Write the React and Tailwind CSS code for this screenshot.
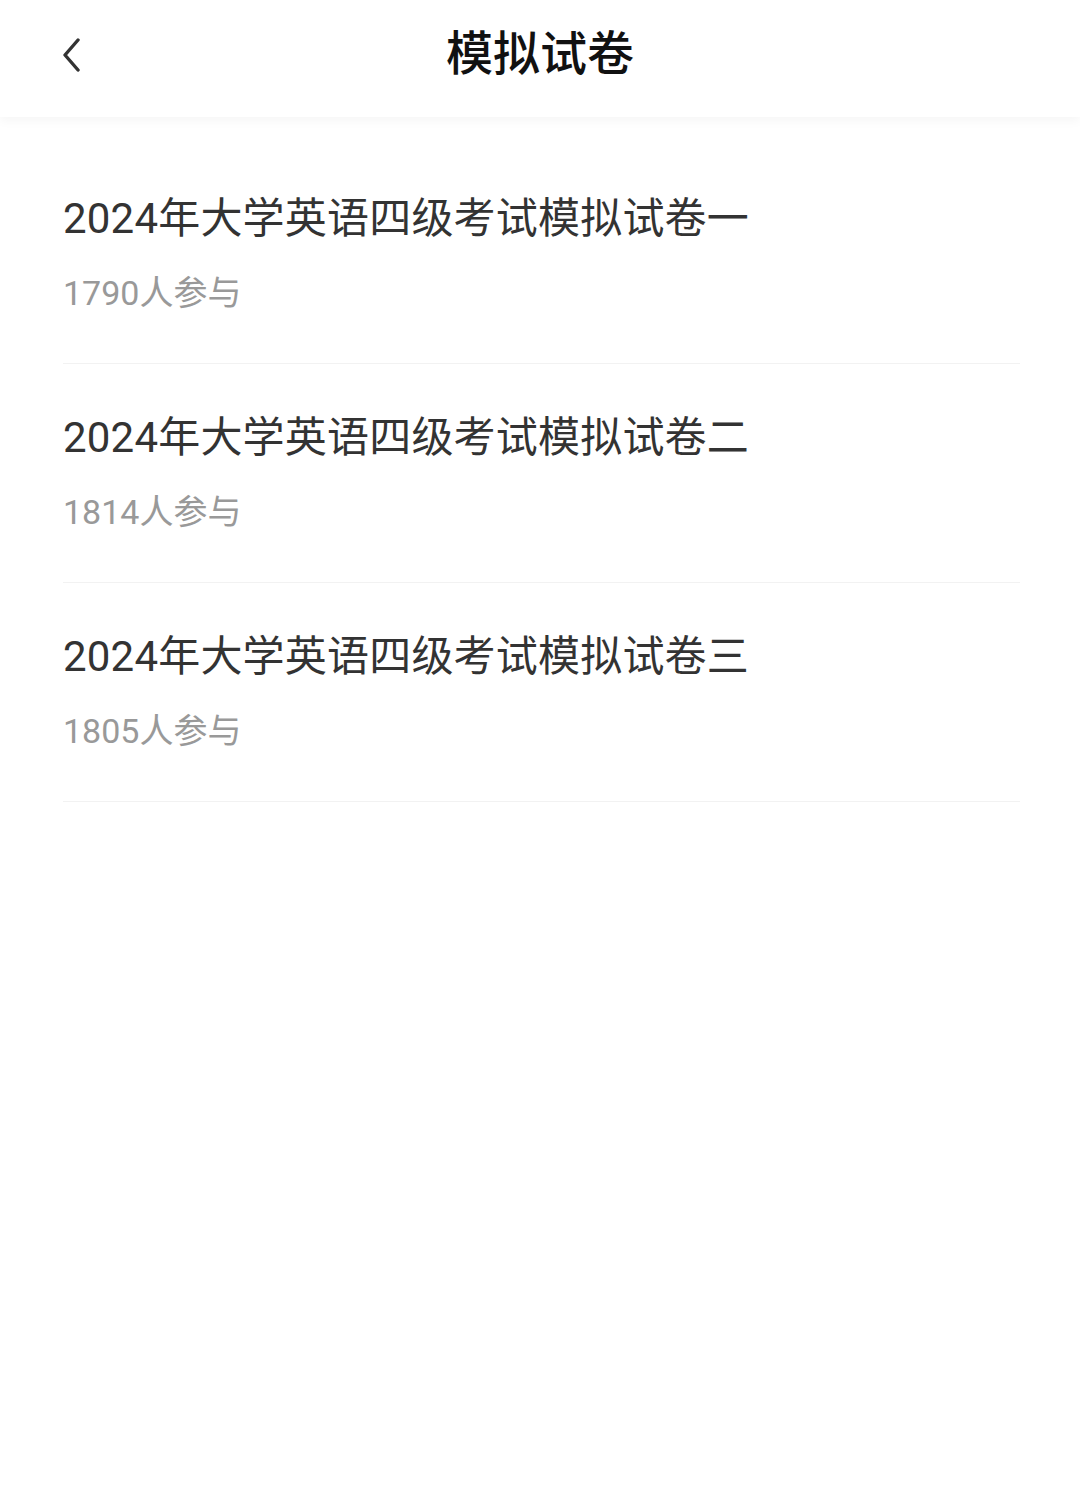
import React from 'react';

const papers = [
    { title: '2024年大学英语四级考试模拟试卷一', count: 1790 },
    { title: '2024年大学英语四级考试模拟试卷二', count: 1814 },
    { title: '2024年大学英语四级考试模拟试卷三', count: 1805 },
];

const App = () => {
    return (
        <div className="min-h-[1498px] bg-white" style={{ fontFamily: 'Roboto, "Noto Sans CJK SC", sans-serif' }}>
            <header className="relative h-[117px] flex items-center justify-center bg-white shadow-[0_4px_10px_rgba(0,0,0,0.04)]">
                <button className="absolute left-[49px] top-[32px] w-[44px] h-[44px] flex items-center justify-center text-[#333]">
                    <svg width="24" height="36" viewBox="0 0 24 36" fill="none">
                        <path d="M19 4 L6 19 L19 34" stroke="#333" strokeWidth="3.4" strokeLinecap="round" strokeLinejoin="round" />
                    </svg>
                </button>
                <h1 className="text-[47px] leading-[56px] font-medium text-[#111] -mt-[10px]">模拟试卷</h1>
            </header>

            <ul className="mt-[28px] px-[63px] pr-[60px]">
                {papers.map((p) => (
                    <li key={p.title} className="pt-[46px] pb-[48px] border-b border-[#f2f2f2]">
                        <p className="text-[42px] tracking-[0.2px] leading-[56px] text-[#333]">{p.title}</p>
                        <p className="mt-[24px] text-[34px] leading-[44px] text-[#999]">{p.count}人参与</p>
                    </li>
                ))}
            </ul>
        </div>
    );
};

export default App;
